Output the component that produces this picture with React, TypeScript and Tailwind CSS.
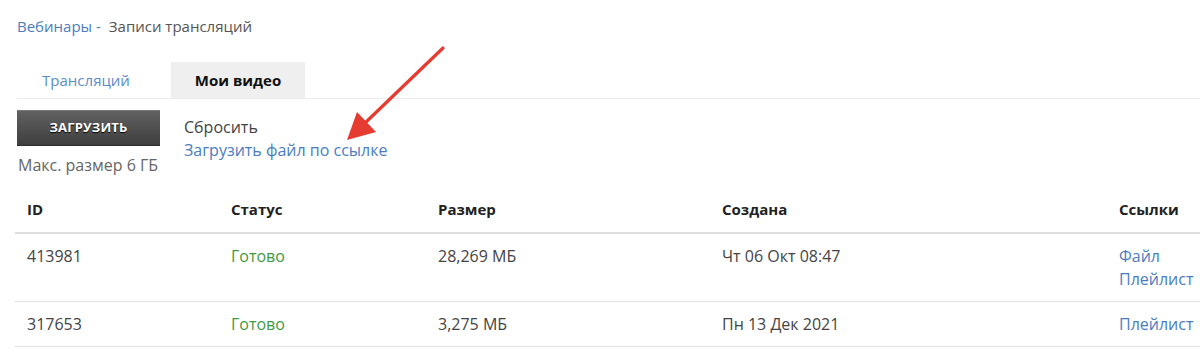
import React from "react";

const rows = [
  { id: "413981", status: "Готово", size: "28,269 МБ", created: "Чт 06 Окт 08:47", links: ["Файл", "Плейлист"] },
  { id: "317653", status: "Готово", size: "3,275 МБ", created: "Пн 13 Дек 2021", links: ["Плейлист"] },
];

function Arrow() {
  return (
    <svg className="pointer-events-none absolute left-[330px] top-[40px]" width="130" height="110" viewBox="330 40 130 110">
      <line x1="443" y1="48" x2="365" y2="123" stroke="#e53b30" strokeWidth="3.2" strokeLinecap="round" />
      <polygon points="347,140 357,112 376,132" fill="#e53b30" />
    </svg>
  );
}

export default function App() {
  return (
    <div className="relative h-[360px] w-[1200px] overflow-hidden bg-white font-['Open_Sans','Liberation_Sans',sans-serif] text-[15px] text-[#444]">
      <Arrow />
      <div className="flex items-center gap-[8px] pl-[17px] pt-[15px] leading-[22px]">
        <a className="text-[#4a7dbf]">Вебинары -</a>
        <span className="text-[#555]">Записи трансляций</span>
      </div>

      <div className="ml-[17px] mt-[25px] flex border-b border-[#ececec]">
        <div className="flex h-[36px] w-[138px] items-center justify-center text-[#5a8cc8]">Трансляций</div>
        <div className="ml-[16px] flex h-[36px] w-[134px] items-center justify-center bg-[#efefef] font-bold text-[#111]">
          Мои видео
        </div>
      </div>

      <div className="ml-[17px] mt-[11px] flex text-[16px]">
        <div className="flex flex-col">
          <button className="flex h-[36px] w-[143px] items-center justify-center border-t border-b border-t-[#777] border-b-[#2e2e2e] bg-gradient-to-b from-[#616161] to-[#3f3f3f] text-[13px] font-bold uppercase tracking-[0.2px] text-white [text-shadow:0_1px_1px_#000]">
            Загрузить
          </button>
          <span className="mt-[8px] pl-[1px] leading-[22px] text-[#666]">Макс. размер 6 ГБ</span>
        </div>
        <div className="ml-[24px] flex flex-col pt-[6px] leading-[23px]">
          <span className="text-[#444]">Сбросить</span>
          <a className="text-[#4a7dbf]">Загрузить файл по ссылке</a>
        </div>
      </div>

      <table className="ml-[15px] mt-[12px] w-[1200px] border-collapse text-left leading-[23px]">
        <thead>
          <tr className="border-b-2 border-[#dedede]">
            <th className="w-[206px] px-[12px] pt-[10px] pb-[11px] font-bold text-[#222]">ID</th>
            <th className="w-[207px] px-[10px] pt-[10px] pb-[11px] font-bold text-[#222]">Статус</th>
            <th className="w-[284px] px-[10px] pt-[10px] pb-[11px] font-bold text-[#222]">Размер</th>
            <th className="w-[397px] px-[10px] pt-[10px] pb-[11px] font-bold text-[#222]">Создана</th>
            <th className="px-[10px] pt-[10px] pb-[11px] font-bold text-[#222]">Ссылки</th>
          </tr>
        </thead>
        <tbody className="text-[16px]">
          {rows.map((r) => (
            <tr key={r.id} className="border-b border-[#e2e2e2] align-top">
              <td className="px-[12px] pt-[11px] pb-[10px]">{r.id}</td>
              <td className="px-[10px] pt-[11px] pb-[10px] text-[#3f9a3f]">{r.status}</td>
              <td className="px-[10px] pt-[11px] pb-[10px]">{r.size}</td>
              <td className="px-[10px] pt-[11px] pb-[10px]">{r.created}</td>
              <td className="px-[10px] pt-[11px] pb-[10px]">
                <div className="flex flex-col text-[#4a7dbf]">
                  {r.links.map((l) => (
                    <a key={l}>{l}</a>
                  ))}
                </div>
              </td>
            </tr>
          ))}
        </tbody>
      </table>
    </div>
  );
}
